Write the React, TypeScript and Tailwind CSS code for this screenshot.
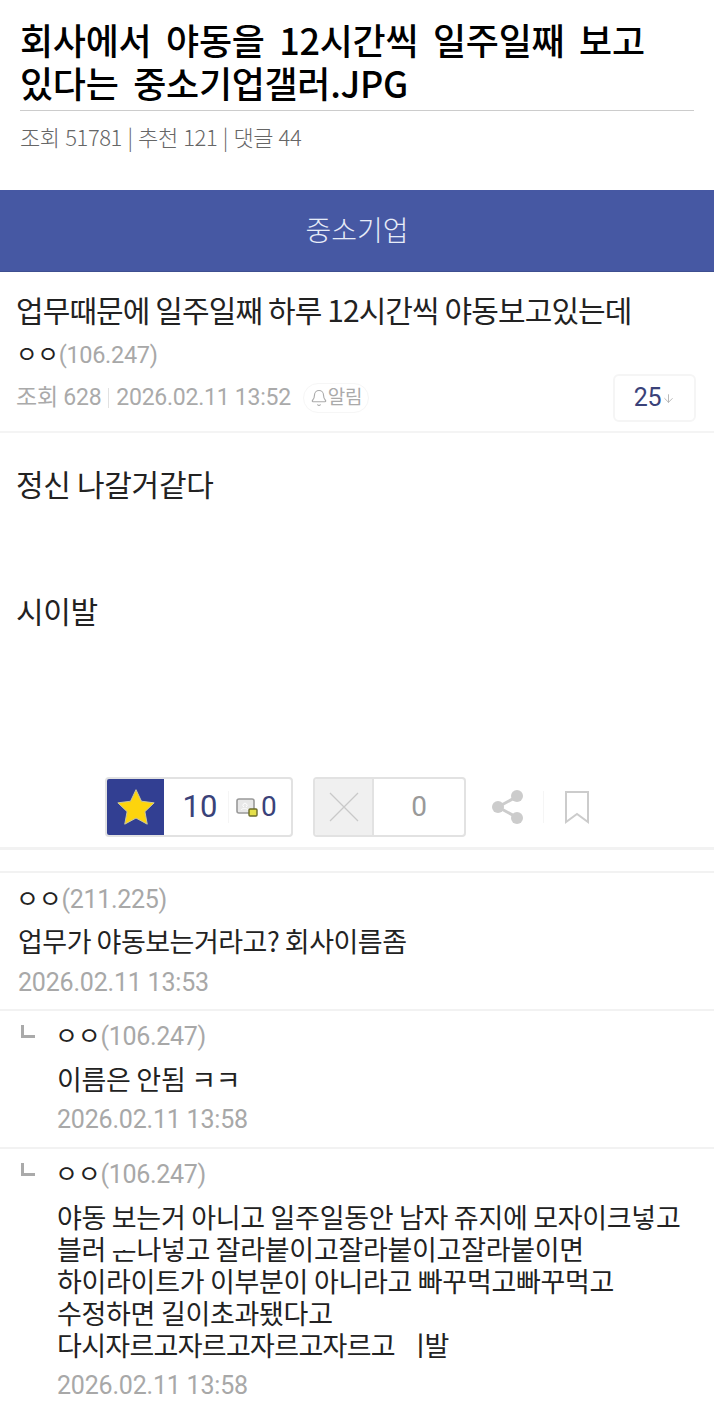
import type { ReactNode } from "react";
import { Bell, ArrowDown } from "lucide-react";

const KR = "font-['Noto_Sans_CJK_KR','Noto_Sans',sans-serif]";
const DATE = "text-[25px] leading-[30px] text-[#a8a8a8] font-['Roboto',sans-serif] tracking-[-0.2px]";

function Writer({ ip, className }: { ip: string; className?: string }) {
  return (
    <p className={`leading-[30px] tracking-[-0.3px] ${className ?? "text-[25px] -ml-[2px]"}`}>
      <span className="text-[#222]">ㅇㅇ</span>
      <span className="text-[#a8a8a8] font-['Roboto',sans-serif]">({ip})</span>
    </p>
  );
}

function ReplyMark() {
  return <div className="w-[14px] h-[13px] border-l-[3px] border-b-[3px] border-[#aaa] mt-[14px] shrink-0" />;
}

// 캡처에서 글자 일부가 지워진 부분
function Masked({ children, cover }: { children: ReactNode; cover: string }) {
  return (
    <span className="relative inline-block">
      {children}
      <span className={`absolute bg-white ${cover}`} />
    </span>
  );
}

function Reply({ ip, lines, date, h }: { ip: string; lines: ReactNode[]; date: string; h: string }) {
  return (
    <div className={`border-t-2 border-[#f2f2f2] pl-[21px] pr-2 flex gap-[22px] ${h}`}>
      <ReplyMark />
      <div className="pt-[8px]">
        <Writer ip={ip} />
        <div className="mt-[11px] text-[27px] leading-[32px] text-[#222] tracking-[-0.3px] whitespace-nowrap">
          {lines.map((l, i) => (
            <p key={i}>{l}</p>
          ))}
        </div>
        <p className={`${DATE} mt-[10px]`}>{date}</p>
      </div>
    </div>
  );
}

export default function App() {
  return (
    <div className={`w-[714px] h-[1406px] overflow-hidden bg-white ${KR}`}>
      {/* article header */}
      <div className="px-5 pt-[18px] h-[190px]">
        <h1 className="text-[36px] leading-[43px] font-medium text-black tracking-[-0.3px] [word-spacing:7px] whitespace-nowrap border-b border-[#ccc] pb-[6px]">
          회사에서 야동을 12시간씩 일주일째 보고
          <br />
          있다는 중소기업갤러.JPG
        </h1>
        <p className="mt-[9px] text-[22px] leading-[32px] font-light text-[#666] tracking-[-0.4px] [word-spacing:1px]">
          조회 51781 | 추천 121 | 댓글 44
        </p>
      </div>

      <div className="h-[82px] pb-[3px] bg-[#4658a3] border-b border-[#3e4f90] flex items-center justify-center text-[28px] font-light text-[#e6ecf8]">
        중소기업
      </div>

      {/* post */}
      <div className="px-4 pt-[17px] h-[161px] border-b-2 border-[#f4f4f4]">
        <p className="text-[30px] leading-[40px] text-[#222] tracking-[-0.9px] whitespace-nowrap">
          업무때문에 일주일째 하루 12시간씩 야동보고있는데
        </p>
        <Writer ip="106.247" className="mt-[9px] text-[23.5px]" />
        <div className="flex items-center mt-[4px] text-[23px] text-[#aaa] font-['Roboto','Noto_Sans_CJK_KR',sans-serif] tracking-[-0.25px]">
          <span>조회 628</span>
          <span className="w-px h-5 bg-[#e2e2e2] mx-[7px]" />
          <span>2026.02.11 13:52</span>
          <span className="ml-3 h-[30px] px-[6px] rounded-full border border-[#f6f6f6] flex items-center text-[19px] text-[#aaa]">
            <Bell size={18} strokeWidth={1.5} />
            알림
          </span>
          <span className="ml-auto mr-[2px] w-[83px] h-[48px] rounded-md border-2 border-[#f5f5f5] flex items-center justify-center text-[#3a4279] text-[25px]">
            25
            <ArrowDown size={13} strokeWidth={1.5} className="text-[#aaa] ml-[1px]" />
          </span>
        </div>
      </div>

      {/* body */}
      <div className="px-4 pt-[29px] h-[344px] text-[30px] leading-[42px] text-[#222] tracking-[-0.3px]">
        <p>정신 나갈거같다</p>
        <p className="mt-[85px]">시이발</p>
      </div>

      {/* recommend */}
      <div className="h-[70px] flex items-start pl-[105px]">
        <div className="w-[188px] h-[60px] rounded border-2 border-[#e2e2e2] flex items-center overflow-hidden">
          <div className="w-[57px] h-full bg-[#323f92] flex items-center justify-center shrink-0">
            <svg width="40" height="38" viewBox="0 0 24 23">
              <path d="M12 1l3.3 7 7.7 1-5.6 5.3 1.4 7.6L12 18.2 5.2 21.9l1.4-7.6L1 9l7.7-1z" fill="#fdd40d" stroke="#c9c6a0" strokeWidth="0.6" />
            </svg>
          </div>
          <span className="w-[64px] text-center text-[31px] font-['Roboto',sans-serif] text-[#3a4279] pl-[8px]">10</span>
          <span className="w-px h-[32px] bg-[#f5f5f5]" />
          <svg width="22" height="20" viewBox="0 0 22 20" className="ml-[7px] mt-[2px]">
            <rect x="1" y="1" width="17" height="14" rx="2" fill="#e8e8e8" stroke="#999" strokeWidth="1.6" />
            <path d="M8 9a2 2 0 1 1 2 0M5 12c1-2 6-2 7 0" fill="none" stroke="#fff" strokeWidth="1" />
            <rect x="13" y="11" width="8" height="7" rx="1" fill="#e5e04a" stroke="#6b6b2a" strokeWidth="1.4" />
          </svg>
          <span className="text-[28px] ml-[3px] font-['Roboto',sans-serif] text-[#3a4279]">0</span>
        </div>
        <div className="ml-5 w-[153px] h-[60px] rounded border-2 border-[#e2e2e2] flex items-center overflow-hidden">
          <div className="w-[59px] h-full bg-[#f0f0f0] border-r-2 border-[#e2e2e2] flex items-center justify-center shrink-0">
            <svg width="30" height="30" viewBox="0 0 30 30">
              <path d="M1 1l28 28M29 1L1 29" stroke="#c9c9c9" strokeWidth="1.3" />
            </svg>
          </div>
          <span className="flex-1 text-center text-[28px] font-['Roboto',sans-serif] text-[#999]">0</span>
        </div>
        <svg width="34" height="34" viewBox="0 0 34 34" className="ml-[25px] mt-[13px]">
          <path d="M27 6L7 17l20 11" stroke="#ccc" strokeWidth="3" fill="none" />
          <circle cx="26" cy="6" r="6" fill="#ccc" />
          <circle cx="7" cy="17" r="6" fill="#ccc" />
          <circle cx="26" cy="28" r="6" fill="#ccc" />
        </svg>
        <span className="w-px h-8 bg-[#f5f5f5] ml-[18px] mt-[14px]" />
        <svg width="26" height="34" viewBox="0 0 26 34" className="ml-[20px] mt-[13px]">
          <path d="M2 2h22v30l-11-8-11 8z" fill="none" stroke="#ccc" strokeWidth="2" />
        </svg>
      </div>

      <div className="h-[26px] border-t-[3px] border-b-2 border-[#f2f2f2]" />

      {/* comments */}
      <div className="h-[136px] pl-[18px] pt-[9px]">
        <Writer ip="211.225" />
        <p className="mt-[8px] text-[27px] leading-[36px] text-[#222] tracking-[-0.5px]">업무가 야동보는거라고? 회사이름좀</p>
        <p className={`${DATE} mt-[9px]`}>2026.02.11 13:53</p>
      </div>
      <Reply ip="106.247" lines={["이름은 안됨 ㅋㅋ"]} date="2026.02.11 13:58" h="h-[138px]" />
      <Reply
        ip="106.247"
        lines={[
          "야동 보는거 아니고 일주일동안 남자 쥬지에 모자이크넣고",
          <>
            블러 <Masked cover="left-0 right-0 top-[4px] h-[13px]">존</Masked>나넣고 잘라붙이고잘라붙이고잘라붙이면
          </>,
          "하이라이트가 이부분이 아니라고 빠꾸먹고빠꾸먹고",
          "수정하면 길이초과됐다고",
          <span className="tracking-[-0.7px]">
            다시자르고자르고자르고자르고 <Masked cover="left-0 w-[17px] top-0 bottom-0">시</Masked>발
          </span>,
        ]}
        date="2026.02.11 13:58"
        h="h-[260px]"
      />
    </div>
  );
}
